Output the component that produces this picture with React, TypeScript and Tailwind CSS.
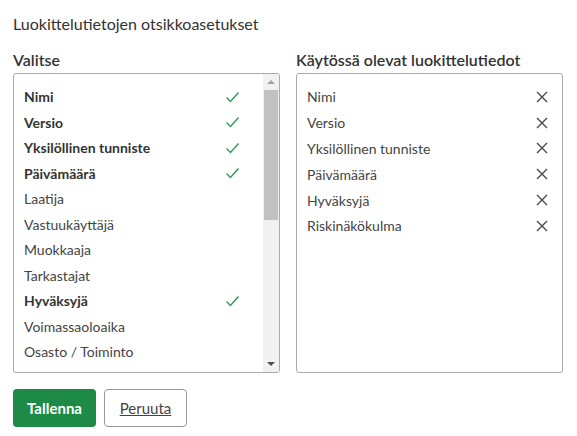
import React from 'react';

const options = [
  { label: 'Nimi', selected: true },
  { label: 'Versio', selected: true },
  { label: 'Yksilöllinen tunniste', selected: true },
  { label: 'Päivämäärä', selected: true },
  { label: 'Laatija', selected: false },
  { label: 'Vastuukäyttäjä', selected: false },
  { label: 'Muokkaaja', selected: false },
  { label: 'Tarkastajat', selected: false },
  { label: 'Hyväksyjä', selected: true },
  { label: 'Voimassaoloaika', selected: false },
  { label: 'Osasto / Toiminto', selected: false },
  { label: 'Tehtävät', selected: false },
];

const active = ['Nimi', 'Versio', 'Yksilöllinen tunniste', 'Päivämäärä', 'Hyväksyjä', 'Riskinäkökulma'];

function Check() {
  return (
    <svg width="15" height="12" viewBox="0 0 15 12" fill="none">
      <path d="M1.5 6.5 L5.5 10.5 L13.5 1.5" stroke="#2f9a5a" strokeWidth="1.4" />
    </svg>
  );
}

function Cross() {
  return (
    <svg width="12" height="12" viewBox="0 0 12 12" fill="none">
      <path d="M1 1 L11 11 M11 1 L1 11" stroke="#4a4a4a" strokeWidth="1.4" />
    </svg>
  );
}

export default function App() {
  return (
    <div className="min-h-screen w-full bg-white px-[13px] pt-[14px] text-[#333] font-['Lato',sans-serif]">
      <h2 className="text-[16px] leading-[20px] text-[#333]">Luokittelutietojen otsikkoasetukset</h2>
      <div className="mt-[16px] grid grid-cols-[267px_267px] gap-[16px]">
        <div>
          <div className="text-[16px] font-semibold leading-[20px] text-[#333]">Valitse</div>
          <div className="mt-[3px] flex h-[300px] overflow-hidden rounded-[3px] border border-[#aaa]">
            <ul className="flex-1 overflow-hidden pl-[10px] pr-[23px] pt-[10px]">
              {options.map((o) => (
                <li key={o.label} className="flex h-[25.5px] items-center justify-between">
                  <span className={`text-[14px] ${o.selected ? 'font-bold text-[#333]' : 'text-[#444]'}`}>{o.label}</span>
                  {o.selected && <Check />}
                </li>
              ))}
            </ul>
            <div className="flex w-[16px] flex-col bg-[#f1f1f1]">
              <div className="flex h-[16px] items-center justify-center">
                <div className="h-0 w-0 border-x-[4px] border-b-[4px] border-x-transparent border-b-[#a3a3a3]" />
              </div>
              <div className="mx-[1px] h-[130px] bg-[#c1c1c1]" />
              <div className="flex-1" />
              <div className="flex h-[16px] items-center justify-center">
                <div className="h-0 w-0 border-x-[4px] border-t-[4px] border-x-transparent border-t-[#505050]" />
              </div>
            </div>
          </div>
        </div>
        <div>
          <div className="text-[16px] font-semibold leading-[20px] text-[#333]">Käytössä olevat luokittelutiedot</div>
          <div className="mt-[3px] h-[300px] rounded-[3px] border border-[#aaa] pl-[10px] pr-[14px] pt-[10px]">
            <ul>
              {active.map((a) => (
                <li key={a} className="flex h-[25.8px] items-center justify-between">
                  <span className="text-[14px] text-[#444]">{a}</span>
                  <Cross />
                </li>
              ))}
            </ul>
          </div>
        </div>
      </div>
      <div className="mt-[16px] flex gap-[8px]">
        <button className="h-[38px] w-[83px] rounded-[4px] bg-[#1d8a48] text-[15px] font-bold text-white">Tallenna</button>
        <button className="h-[38px] w-[83px] rounded-[4px] border border-[#999] bg-white text-[15px] text-[#444] underline">Peruuta</button>
      </div>
    </div>
  );
}
